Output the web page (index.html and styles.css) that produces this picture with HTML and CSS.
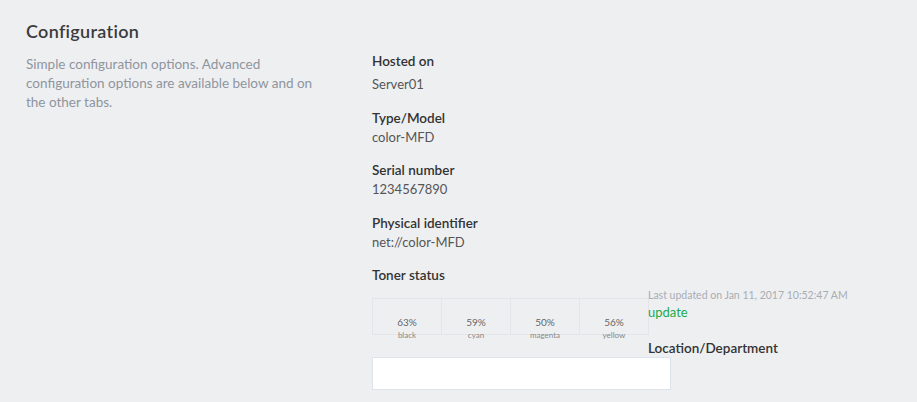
FILE: index.html
```html
<!DOCTYPE html>
<html lang="en">
<head>
<meta charset="utf-8">
<title>Configuration</title>
<link rel="stylesheet" href="styles.css">
</head>
<body>
<div class="page">
  <h1 class="title">Configuration</h1>
  <div class="layout">
    <div class="intro">
      <p>Simple configuration options. Advanced configuration options are available below and on the other tabs.</p>
    </div>
    <div class="details">
      <div class="field first">
        <div class="label">Hosted on</div>
        <div class="value">Server01</div>
      </div>
      <div class="field">
        <div class="label">Type/Model</div>
        <div class="value">color-MFD</div>
      </div>
      <div class="field">
        <div class="label">Serial number</div>
        <div class="value">1234567890</div>
      </div>
      <div class="field">
        <div class="label">Physical identifier</div>
        <div class="value">net://color-MFD</div>
      </div>
      <div class="field">
        <div class="label">Toner status</div>
      </div>
      <div class="toner-row">
        <div class="toner">
          <div class="tile"><span class="pct">63%</span><span class="name">black</span></div>
          <div class="tile"><span class="pct">59%</span><span class="name">cyan</span></div>
          <div class="tile"><span class="pct">50%</span><span class="name">magenta</span></div>
          <div class="tile"><span class="pct">56%</span><span class="name">yellow</span></div>
        </div>
        <div class="toner-side">
          <div class="updated">Last updated on Jan 11, 2017 10:52:47 AM</div>
          <a class="update" href="#">update</a>
          <div class="label loc">Location/Department</div>
        </div>
      </div>
      <input class="text-input" type="text">
    </div>
  </div>
</div>
</body>
</html>
```
FILE: styles.css
```css
html, body {
  margin: 0;
  padding: 0;
  background: #eeeff1;
}
body {
  font-family: Lato, "Noto Sans", "Liberation Sans", sans-serif;
  color: #333;
}
.page {
  padding: 19px 26px 0 26px;
}
.title {
  margin: 0;
  font-size: 18px;
  font-weight: 600;
  color: #3b3b3d;
  line-height: 24px;
  letter-spacing: 0.3px;
}
.layout {
  display: flex;
  gap: 46px;
  margin-top: 8px;
}
.intro {
  width: 300px;
  flex: none;
}
.intro p {
  margin: 4px 0 0 0;
  font-size: 13.5px;
  line-height: 19px;
  color: #8e959e;
}
.details {
  flex: 1;
}
.field {
  margin-top: 13.5px;
}
.field.first {
  margin-top: 0;
}
.label {
  font-size: 13.5px;
  font-weight: 600;
  color: #333;
  line-height: 20px;
}
.value {
  font-size: 13px;
  color: #555;
  line-height: 19px;
}
.field.first .value {
  margin-top: 4px;
}
.toner-row {
  display: flex;
  margin-top: 0;
}
.toner {
  display: flex;
  margin-top: 13px;
  height: 36px;
}
.tile {
  width: 68px;
  height: 35px;
  border: 1px solid #e3e5e8;
  border-right: 0;
  display: flex;
  flex-direction: column;
  align-items: center;
  justify-content: flex-end;
}
.tile:last-child {
  border-right: 1px solid #e3e5e8;
}
.pct {
  font-size: 10px;
  color: #666;
  line-height: 12px;
  margin-bottom: 3px;
}
.name {
  font-size: 8px;
  color: #888;
  line-height: 8px;
  margin-bottom: -5px;
}
.toner-side {
  display: flex;
  flex-direction: column;
  padding-top: 3px;
  margin-left: -1px;
}
.updated {
  font-size: 10.5px;
  color: #a8adb3;
  line-height: 14px;
}
.update {
  font-size: 13px;
  color: #1aab4f;
  text-decoration: none;
  line-height: 20px;
}
.label.loc {
  margin-top: 17px;
  line-height: 18px;
}
.text-input {
  display: block;
  width: 299px;
  height: 33px;
  box-sizing: border-box;
  border: 1px solid #dce3ea;
  background: #fff;
  margin: 0;
  padding: 0 8px;
  outline: none;
}
```
